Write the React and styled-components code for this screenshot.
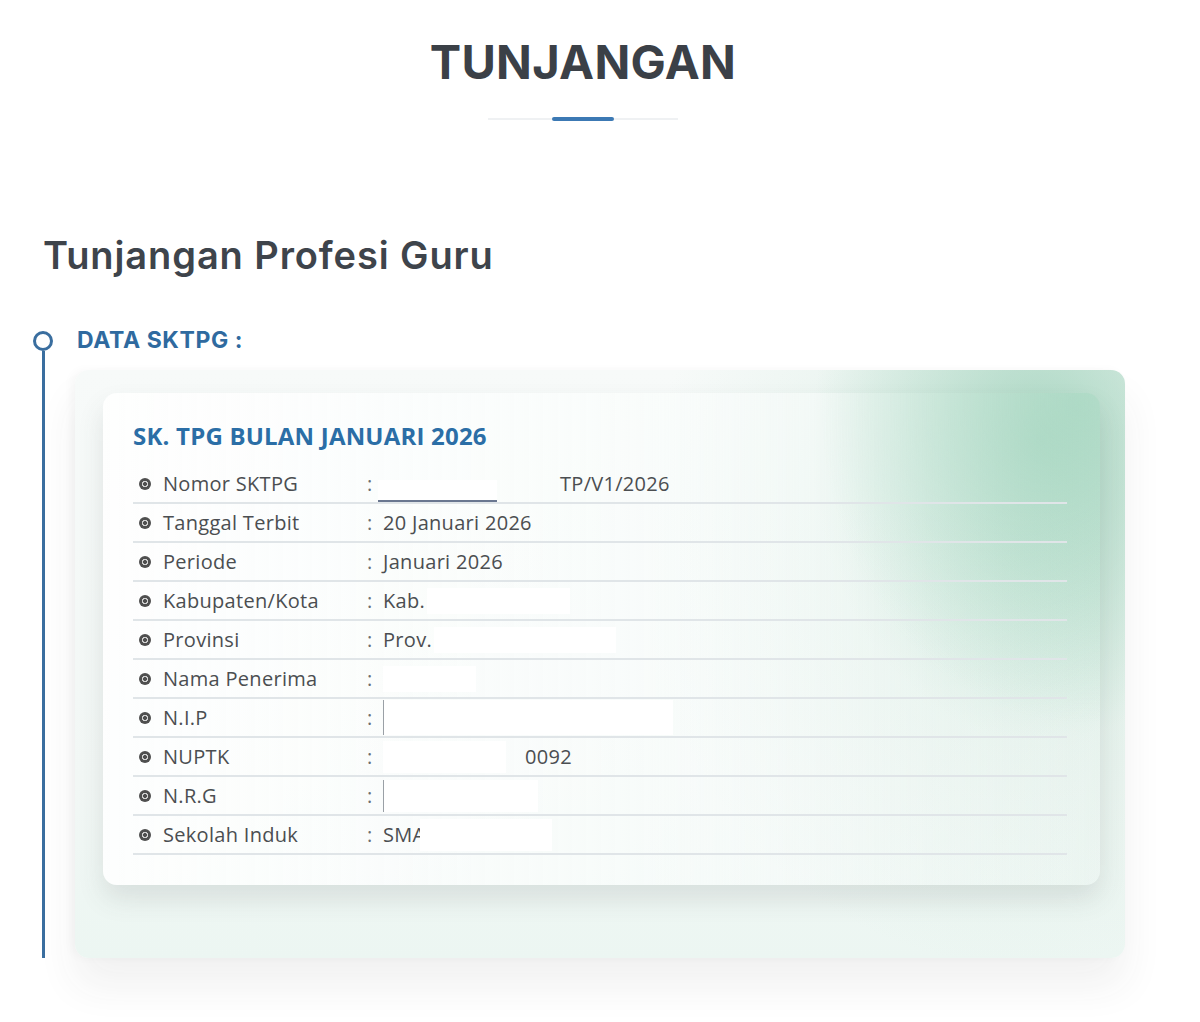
import React from "react";
import styled, { createGlobalStyle } from "styled-components";

const Global = createGlobalStyle`
  html, body { margin: 0; padding: 0; background: #ffffff; }
  body { font-family: "Open Sans", "Liberation Sans", sans-serif; }
  * { box-sizing: border-box; }
`;

const Page = styled.div`
  width: 1200px;
  min-height: 1022px;
  padding-top: 34px;
  overflow: hidden;
`;

const TitleBlock = styled.header`
  display: flex;
  flex-direction: column;
  align-items: center;
  padding-right: 34px;
`;

const Title = styled.h1`
  margin: 0;
  font-family: Inter, "Liberation Sans", sans-serif;
  font-weight: 700;
  font-size: 47px;
  line-height: 56px;
  letter-spacing: 0.3px;
  color: #3b4047;
`;

const Divider = styled.div`
  margin-top: 27px;
  width: 190px;
  height: 4px;
  display: flex;
  align-items: center;
  justify-content: center;
  background: linear-gradient(#eff1f3, #eff1f3) center / 100% 2px no-repeat;
`;

const DividerAccent = styled.span`
  width: 62px;
  height: 4px;
  border-radius: 2px;
  background: #3c79b4;
`;

const SectionTitle = styled.h2`
  margin: 112px 0 0 43px;
  font-family: Inter, "Liberation Sans", sans-serif;
  font-weight: 600;
  font-size: 38px;
  line-height: 44px;
  letter-spacing: 0.9px;
  color: #3e444b;
`;

const Timeline = styled.section`
  display: flex;
  margin-top: 51px;
  padding-left: 33px;
`;

const Rail = styled.div`
  width: 20px;
  display: flex;
  flex-direction: column;
  align-items: center;
  padding-top: 3px;
`;

const Node = styled.span`
  width: 20px;
  height: 20px;
  border-radius: 50%;
  border: 3px solid #3a6e9f;
  background: #fff;
  flex-shrink: 0;
`;

const RailLine = styled.span`
  width: 3px;
  flex: 1;
  background: #3a6e9f;
`;

const TimelineBody = styled.div`
  margin-left: 22px;
  display: flex;
  flex-direction: column;
`;

const StepLabel = styled.div`
  padding-left: 2px;
  font-family: Inter, "Liberation Sans", sans-serif;
  font-weight: 700;
  font-size: 23px;
  line-height: 24px;
  letter-spacing: 0.6px;
  color: #2f6a9f;
  margin-bottom: 18px;
`;

const OuterCard = styled.div`
  width: 1050px;
  padding: 23px 25px 73px 28px;
  border-radius: 14px;
  background:
    radial-gradient(ellipse 230px 300px at 92% 12%, rgba(150, 205, 180, 0.7), rgba(150, 205, 180, 0) 100%),
    radial-gradient(ellipse 380px 420px at 90% 30%, rgba(190, 225, 208, 0.5), rgba(190, 225, 208, 0) 100%),
    linear-gradient(180deg, #f7faf9 0%, #f2f7f5 70%, #ecf6f2 100%);
  box-shadow: 0 28px 40px rgba(60, 60, 60, 0.07), -4px 0 10px rgba(0, 0, 0, 0.03);
`;

const InnerCard = styled.div`
  padding: 28px 33px 30px 30px;
  border-radius: 14px;
  background:
    radial-gradient(ellipse 260px 320px at 98% 2%, rgba(160, 212, 188, 0.6), rgba(160, 212, 188, 0) 100%),
    linear-gradient(90deg, rgba(255, 255, 255, 0.85) 0%, rgba(250, 253, 252, 0.7) 55%, rgba(245, 251, 249, 0.15) 100%);
  box-shadow: 0 14px 26px rgba(70, 80, 80, 0.13);
`;

const CardHeading = styled.h3`
  margin: 0 0 14px;
  font-family: "Open Sans", "Liberation Sans", sans-serif;
  font-weight: 700;
  font-size: 24px;
  line-height: 30px;
  letter-spacing: 0.2px;
  color: #2b6ea6;
`;

const Row = styled.div`
  display: grid;
  grid-template-columns: 30px 204px 16px 1fr;
  align-items: center;
  height: 39px;
  border-bottom: 2px solid #e0e5e8;
  font-size: 20px;
  letter-spacing: 0.3px;
  color: #4b4e51;
`;

const Bullet = styled.span`
  width: 12px;
  height: 12px;
  margin-left: 6px;
  border-radius: 50%;
  background: radial-gradient(circle, #4f4f4f 0 1.8px, #d4d4d4 2.2px 2.9px, #4f4f4f 3.3px);
`;

const Colon = styled.span`
  color: #6a6d70;
`;

const Value = styled.span`
  display: flex;
  align-items: center;
  height: 100%;
  white-space: nowrap;
`;

const Mask = styled.span`
  display: inline-block;
  width: ${(p) => p.$w}px;
  height: ${(p) => p.$h || 26}px;
  margin-left: ${(p) => p.$ml || 0}px;
  margin-right: ${(p) => p.$mr || 0}px;
  background: #ffffff;
  border-bottom: ${(p) => (p.$line ? "2px solid #6a7790" : "none")};
  border-left: ${(p) => (p.$edge ? "1px solid #9aa0a6" : "none")};
  align-self: ${(p) => p.$align || "center"};
`;

const rows = [
  { label: "Nomor SKTPG", value: <><Mask $w={119} $h={22} $ml={-5} $line $align="flex-end" $mr={63} />TP/V1/2026</> },
  { label: "Tanggal Terbit", value: "20 Januari 2026" },
  { label: "Periode", value: "Januari 2026" },
  { label: "Kabupaten/Kota", value: <>Kab.<Mask $w={143} $ml={2} /></> },
  { label: "Provinsi", value: <>Prov.<Mask $w={182} $ml={2} /></> },
  { label: "Nama Penerima", value: <Mask $w={93} /> },
  { label: "N.I.P", value: <Mask $w={290} $h={35} $edge /> },
  { label: "NUPTK", value: <><Mask $w={123} $h={32} $mr={19} />0092</> },
  { label: "N.R.G", value: <Mask $w={155} $h={32} $edge /> },
  { label: "Sekolah Induk", value: <>SM<span style={{ marginRight: -6 }}>A</span><Mask $w={132} $h={32} /></> },
];

export default function App() {
  return (
    <Page>
      <Global />
      <TitleBlock>
        <Title>TUNJANGAN</Title>
        <Divider>
          <DividerAccent />
        </Divider>
      </TitleBlock>
      <SectionTitle>Tunjangan Profesi Guru</SectionTitle>
      <Timeline>
        <Rail>
          <Node />
          <RailLine />
        </Rail>
        <TimelineBody>
          <StepLabel>DATA SKTPG :</StepLabel>
          <OuterCard>
            <InnerCard>
              <CardHeading>SK. TPG BULAN JANUARI 2026</CardHeading>
              {rows.map((r) => (
                <Row key={r.label}>
                  <Bullet />
                  <span>{r.label}</span>
                  <Colon>:</Colon>
                  <Value>{r.value}</Value>
                </Row>
              ))}
            </InnerCard>
          </OuterCard>
        </TimelineBody>
      </Timeline>
    </Page>
  );
}
